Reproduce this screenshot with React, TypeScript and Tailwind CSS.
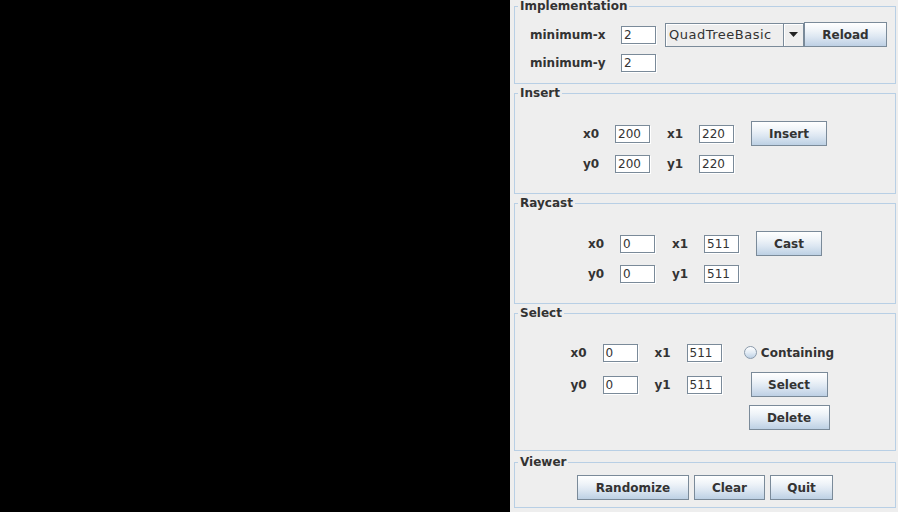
import type { ReactNode } from "react";

const BUTTON_BG =
  "bg-[linear-gradient(to_bottom,#ffffff_0%,#eef3f8_35%,#dde7f2_60%,#bdd0e4_100%)]";

function TitledPanel({
  title,
  className,
  children,
}: {
  title: string;
  className: string;
  children: ReactNode;
}) {
  return (
    <fieldset
      className={`m-0 min-w-0 border border-[#b8cfe5] p-0 ${className}`}
    >
      <legend className="ml-[3px] px-[2px] text-[12px] font-bold leading-[12px] text-[#333333]">
        {title}
      </legend>
      {children}
    </fieldset>
  );
}

function Label({ text, width = "w-[32px]" }: { text: string; width?: string }) {
  return (
    <span className={`${width} shrink-0 text-[12px] font-bold leading-[14px] text-[#333333]`}>
      {text}
    </span>
  );
}

function Field({ value }: { value: string }) {
  return (
    <div className="h-[18px] w-[35px] shrink-0 border border-[#7a8a99] bg-white pl-[2px] text-[12px] leading-[16px] text-[#333333] shadow-[1px_1px_0_#ffffff]">
      {value}
    </div>
  );
}

function SwingButton({ label, width }: { label: string; width: string }) {
  return (
    <div
      className={`flex h-[25px] shrink-0 items-center justify-center border border-[#7a8a99] ${BUTTON_BG} ${width} text-[12px] font-bold text-[#333333]`}
    >
      {label}
    </div>
  );
}

function CoordBlock({
  values,
  button,
}: {
  values: [string, string, string, string];
  button: ReactNode;
}) {
  return (
    <div className="flex justify-center pt-[22px]">
      <div className="flex flex-col">
        <div className="flex h-[25px] items-center">
          <Label text="x0" />
          <Field value={values[0]} />
          <span className="w-[17px]" />
          <Label text="x1" />
          <Field value={values[1]} />
          <span className="w-[17px]" />
          {button}
        </div>
        <div className="mt-[8px] flex h-[19px] items-center">
          <Label text="y0" />
          <Field value={values[2]} />
          <span className="w-[17px]" />
          <Label text="y1" />
          <Field value={values[3]} />
        </div>
      </div>
    </div>
  );
}

export default function App() {
  return (
    <div className="flex h-[512px] w-[898px] bg-[#eeeeee] font-['DejaVu_Sans',sans-serif]">
      <div className="h-full w-[510px] shrink-0 bg-black" />

      <div className="flex flex-1 flex-col pl-[4px] pr-[2px]">
        <TitledPanel title="Implementation" className="h-[84px]">
          <div className="pl-[15px] pt-[10px]">
            <div className="flex h-[25px] items-center">
              <Label text="minimum-x" width="w-[91px]" />
              <Field value="2" />
              <span className="w-[9px]" />
              <div className="flex h-[24px] w-[139px] border border-[#7a8a99] bg-[#eeeeee]">
                <div className="flex flex-1 items-center pl-[3px] text-[13px] tracking-[0.5px] text-[#333333] shadow-[inset_1px_1px_0_#ffffff]">
                  QuadTreeBasic
                </div>
                <div className="flex w-[20px] items-center justify-center border-l border-[#7a8a99] shadow-[inset_1px_1px_0_#ffffff]">
                  <svg width="9" height="5" viewBox="0 0 9 5">
                    <path d="M0 0 H9 L4.5 5 Z" fill="#222222" />
                  </svg>
                </div>
              </div>
              <SwingButton label="Reload" width="w-[83px]" />
            </div>
            <div className="mt-[6px] flex h-[19px] items-center">
              <Label text="minimum-y" width="w-[91px]" />
              <Field value="2" />
            </div>
          </div>
        </TitledPanel>

        <TitledPanel title="Insert" className="mt-[3px] h-[107px]">
          <CoordBlock
            values={["200", "220", "200", "220"]}
            button={<SwingButton label="Insert" width="w-[76px]" />}
          />
        </TitledPanel>

        <TitledPanel title="Raycast" className="mt-[3px] h-[107px]">
          <CoordBlock
            values={["0", "511", "0", "511"]}
            button={<SwingButton label="Cast" width="w-[66px]" />}
          />
        </TitledPanel>

        <TitledPanel title="Select" className="mt-[3px] h-[144px]">
          <div className="flex justify-center pr-[4px] pt-[21px]">
            <div className="flex flex-col">
              <div className="flex h-[25px] items-center">
                <Label text="x0" />
                <Field value="0" />
                <span className="w-[17px]" />
                <Label text="x1" />
                <Field value="511" />
              </div>
              <div className="mt-[7px] flex h-[25px] items-center">
                <Label text="y0" />
                <Field value="0" />
                <span className="w-[17px]" />
                <Label text="y1" />
                <Field value="511" />
              </div>
            </div>
            <div className="ml-[21px] flex w-[93px] flex-col items-center">
              <div className="flex h-[25px] items-center">
                <span className="h-[13px] w-[13px] rounded-full border border-[#8a9aab] bg-[linear-gradient(to_bottom,#ffffff_0%,#e3ecf5_50%,#bdd0e4_100%)]" />
                <span className="ml-[4px] text-[12px] font-bold text-[#333333]">
                  Containing
                </span>
              </div>
              <div className="mt-[7px]">
                <SwingButton label="Select" width="w-[77px]" />
              </div>
              <div className="mt-[8px]">
                <SwingButton label="Delete" width="w-[81px]" />
              </div>
            </div>
          </div>
        </TitledPanel>

        <TitledPanel title="Viewer" className="mt-[5px] h-[52px]">
          <div className="flex justify-center gap-[5px] pt-[7px]">
            <SwingButton label="Randomize" width="w-[112px]" />
            <SwingButton label="Clear" width="w-[71px]" />
            <SwingButton label="Quit" width="w-[63px]" />
          </div>
        </TitledPanel>
      </div>
    </div>
  );
}
